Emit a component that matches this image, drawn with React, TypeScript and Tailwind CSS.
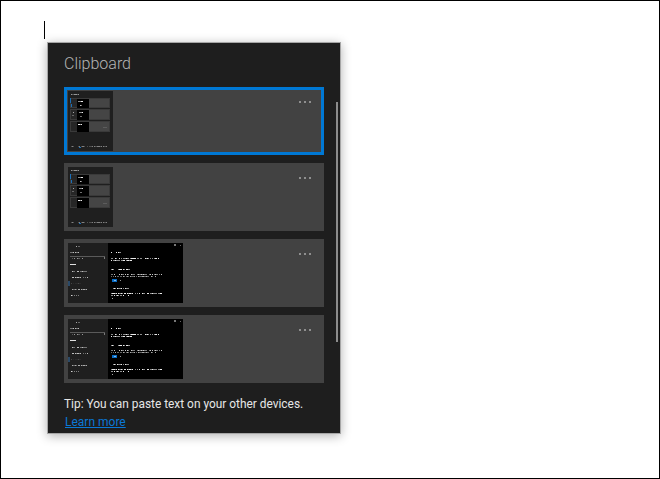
import React from "react";

function noisy(x: number, y: number, len: number, hi = 235): React.ReactNode[] {
  const out: React.ReactNode[] = [];
  let seed = x * 31 + y * 17 + len * 7 + 5;
  for (let i = 0; i < len; i++) {
    seed = (seed * 137 + 59) % 251;
    const r = seed % 10;
    if (r < 3) continue;
    const v = r > 6 ? hi : Math.round(hi * 0.6);
    out.push(<rect key={`${x}-${y}-${i}`} x={x + i} y={y} width={1} height={1} fill={`rgb(${v},${v},${v})`} />);
  }
  return out;
}

function TallThumb() {
  const row = (y: number, h: number, dim?: boolean) => (
    <g key={y}>
      <rect x={2} y={y} width={40} height={h} fill="#3a3a3a" />
      <rect x={3} y={y + 1} width={6} height={h - 2} fill="#262626" />
      <rect x={9} y={y + 1} width={12} height={h - 1} fill="#000" />
      <rect x={21} y={y + 1} width={20} height={h - 2} fill="#454545" />
      {noisy(10, y + 3, 5)}
      {!dim && noisy(12, y + 7, 2, 190)}
    </g>
  );
  return (
    <svg width="45" height="60" className="block shrink-0" shapeRendering="crispEdges">
      <rect width="45" height="60" fill="#1f1f1f" />
      {noisy(3, 3, 9, 150)}
      {row(7, 10)}
      {row(18, 11)}
      {row(30, 11, true)}
      <rect x={2} y={7} width={1} height={5} fill="#1a6fb8" />
      <rect x={3} y={13} width={1} height={3} fill="#1a6fb8" />
      {noisy(3, 21, 3, 170)}
      {noisy(3, 24, 3, 170)}
      <rect x={35} y={36} width={4} height={1} fill="#5c5c5c" />
      {noisy(3, 55, 36, 130)}
      <rect x={11} y={56} width={2} height={1} fill="#1a6fb8" />
    </svg>
  );
}

function WideThumb() {
  return (
    <svg width="115" height="60" className="block shrink-0" shapeRendering="crispEdges">
      <rect width="115" height="60" fill="#000" />
      <rect width="40" height="60" fill="#1f1f1f" />
      {noisy(8, 3, 5, 170)}
      {noisy(2, 9, 9, 190)}
      <rect x={2} y={13} width={35} height={1} fill="#5a5a5a" />
      {noisy(3, 15, 12, 150)}
      <rect x={36} y={14} width={1} height={2} fill="#7a7a7a" />
      <rect x={2} y={21} width={6} height={1} fill="#e0e0e0" />
      {noisy(3, 28, 17, 190)}
      {noisy(3, 34, 19, 190)}
      {noisy(3, 40, 11, 70)}
      {noisy(3, 46, 16, 170)}
      {noisy(3, 52, 8, 210)}
      <rect x={0} y={38} width={2} height={5} fill="#2b4a68" />
      <rect x={106} y={1} width={2} height={2} fill="#777" />
      <rect x={112} y={2} width={1} height={1} fill="#666" />
      {noisy(43, 9, 11)}
      {noisy(43, 15, 49)}
      {noisy(43, 17, 21)}
      {noisy(43, 26, 19)}
      {noisy(43, 31, 52, 200)}
      {noisy(43, 33, 46, 170)}
      <rect x={44} y={36} width={5} height={3} fill="#0a6cc4" />
      <rect x={46} y={37} width={2} height={1} fill="#7fb8e8" />
      {noisy(50, 37, 3, 150)}
      {noisy(44, 45, 17)}
      {noisy(43, 50, 51)}
      {noisy(43, 52, 18)}
      {noisy(43, 55, 2, 170)}
    </svg>
  );
}

function Card({ selected, children }: { selected?: boolean; children: React.ReactNode }) {
  return (
    <div
      className={`relative h-[68px] w-[260px] bg-[#424242] p-[4px] ${
        selected ? "shadow-[inset_0_0_0_3px_#0078d4]" : ""
      }`}
    >
      {children}
      <div className="absolute right-[13px] top-[14px] flex gap-[3px]">
        <span className="h-[2px] w-[2px] bg-[#8f8f8f]" />
        <span className="h-[2px] w-[2px] bg-[#8f8f8f]" />
        <span className="h-[2px] w-[2px] bg-[#8f8f8f]" />
      </div>
    </div>
  );
}

export default function App() {
  return (
    <div
      className="flex h-[479px] w-[660px] items-start border border-black bg-white pl-[43px] pt-[20px]"
      style={{ fontFamily: 'Roboto, "Open Sans", sans-serif' }}
    >
      <div className="h-[18px] w-[1px] shrink-0 bg-black" />
      <div className="relative ml-[2px] mt-[21px] flex h-[392px] w-[294px] flex-col border border-[#a6a6a6] bg-[#1e1e1e] pl-[16px] shadow-[0_2px_10px_rgba(0,0,0,0.3)]">
        <div className="mt-[10px] h-[22px] text-[16px] font-light leading-[22px] text-[#b4b4b4]">Clipboard</div>
        <div className="mt-[12px] flex flex-col gap-[8px]">
          <Card selected><TallThumb /></Card>
          <Card><TallThumb /></Card>
          <Card><WideThumb /></Card>
          <Card><WideThumb /></Card>
        </div>
        <div className="mt-[13px] text-[11.9px] leading-[17px] text-[#e6e6e6]">Tip: You can paste text on your other devices.</div>
        <a className="ml-[1px] mt-[1px] text-[12px] leading-[17px] text-[#0a78d6] underline">Learn more</a>
        <div className="absolute left-[288px] top-[59px] h-[240px] w-[2px] bg-[#8c8c8c]" />
      </div>
    </div>
  );
}
